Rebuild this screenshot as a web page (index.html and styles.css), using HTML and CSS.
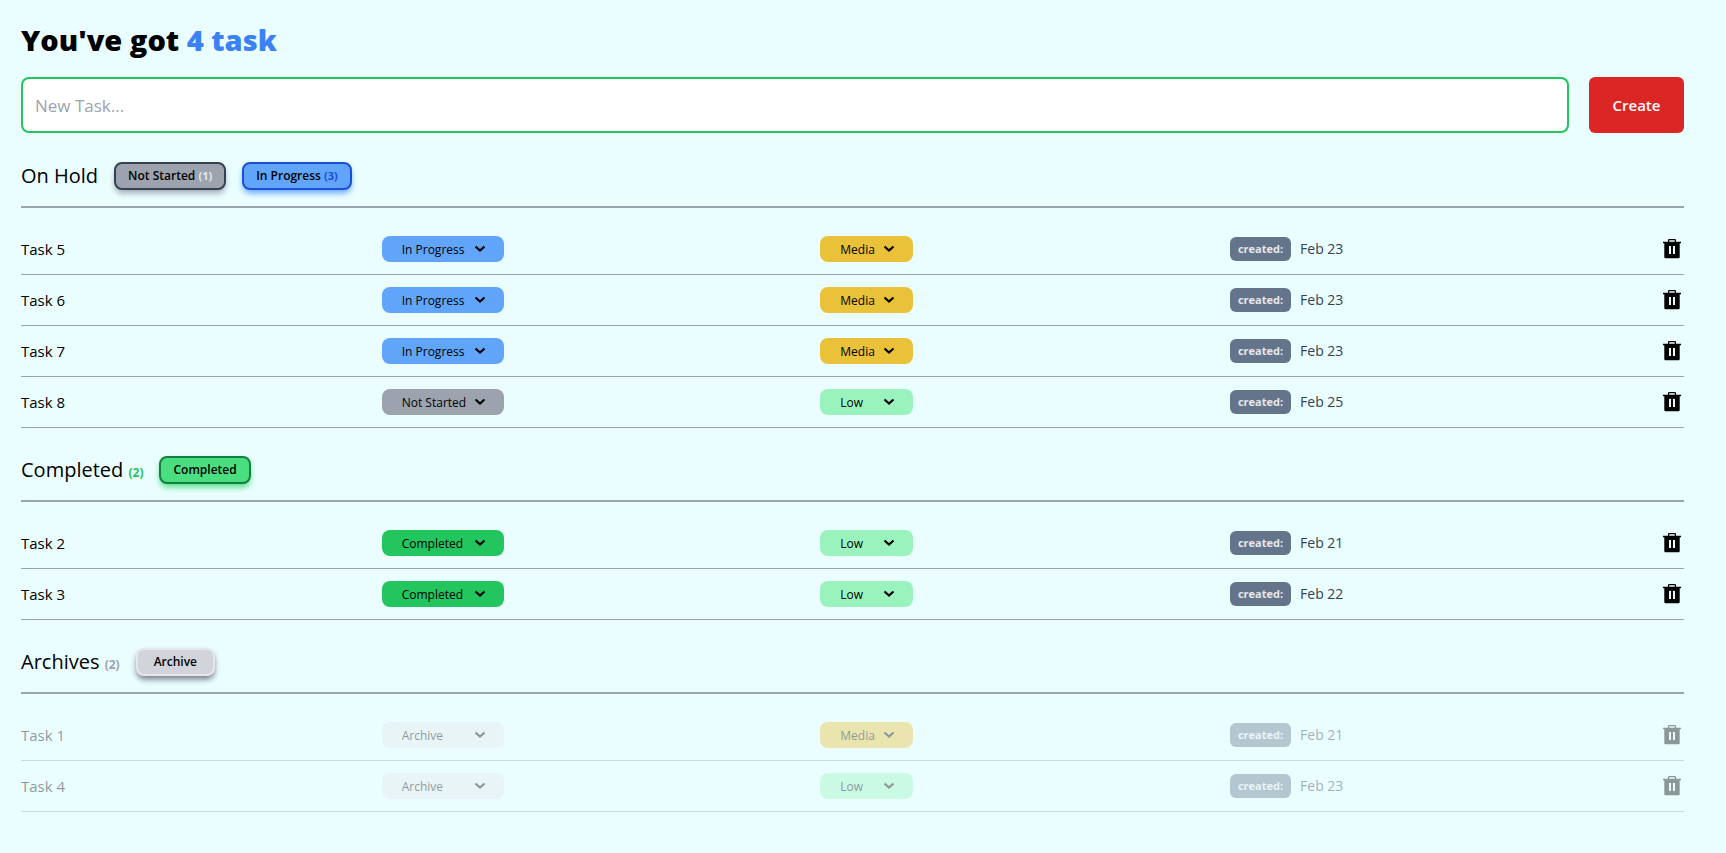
FILE: index.html
```html
<!DOCTYPE html>
<html lang="en">
<head>
<meta charset="utf-8">
<meta name="viewport" content="width=device-width, initial-scale=1">
<title>Tasks</title>
<link rel="stylesheet" href="styles.css">
</head>
<body>
<svg class="sprite" aria-hidden="true">
  <symbol id="trash" viewBox="0 0 20 22">
    <path d="M6.600 4V2.300Q6.600 1.700 7.200 1.700H12.800Q13.400 1.700 13.400 2.300V4" fill="none" stroke="currentColor" stroke-width="1.300"/>
    <path fill-rule="evenodd" d="M1 3.700H19V5.300H17.700V19Q17.700 20.300 16.400 20.300H3.600Q2.300 20.300 2.300 19V5.300H1ZM7 8V16H9V8ZM11 8V16H13V8Z" fill="currentColor"/>
  </symbol>
</svg>
<main class="page">
  <h1 class="title">You've got <span class="title-count">4 task</span></h1>
  <form class="new-task">
    <input class="new-task-input" type="text" placeholder="New Task..." aria-label="New task">
    <button class="new-task-submit" type="button">Create</button>
  </form>

  <section>
    <header class="section-head">
      <h2 class="section-title">On Hold</h2>
      <button class="badge badge-idle" type="button">Not Started <span class="count">(1)</span></button>
      <button class="badge badge-progress" type="button">In Progress <span class="count">(3)</span></button>
    </header>
    <ul class="tasks">
      <li class="task">
        <span class="task-name">Task 5</span>
        <select class="pick status progress" aria-label="Status of Task 5"><option>Not Started</option><option selected>In Progress</option><option>Completed</option><option>Archive</option></select>
        <select class="pick priority media" aria-label="Priority of Task 5"><option>Low</option><option selected>Media</option><option>High</option></select>
        <span class="created"><span class="created-label">created:</span><time>Feb 23</time></span>
        <button class="delete" type="button" aria-label="Delete Task 5"><svg class="icon"><use href="#trash"/></svg></button>
      </li>
      <li class="task">
        <span class="task-name">Task 6</span>
        <select class="pick status progress" aria-label="Status of Task 6"><option>Not Started</option><option selected>In Progress</option><option>Completed</option><option>Archive</option></select>
        <select class="pick priority media" aria-label="Priority of Task 6"><option>Low</option><option selected>Media</option><option>High</option></select>
        <span class="created"><span class="created-label">created:</span><time>Feb 23</time></span>
        <button class="delete" type="button" aria-label="Delete Task 6"><svg class="icon"><use href="#trash"/></svg></button>
      </li>
      <li class="task">
        <span class="task-name">Task 7</span>
        <select class="pick status progress" aria-label="Status of Task 7"><option>Not Started</option><option selected>In Progress</option><option>Completed</option><option>Archive</option></select>
        <select class="pick priority media" aria-label="Priority of Task 7"><option>Low</option><option selected>Media</option><option>High</option></select>
        <span class="created"><span class="created-label">created:</span><time>Feb 23</time></span>
        <button class="delete" type="button" aria-label="Delete Task 7"><svg class="icon"><use href="#trash"/></svg></button>
      </li>
      <li class="task">
        <span class="task-name">Task 8</span>
        <select class="pick status idle" aria-label="Status of Task 8"><option selected>Not Started</option><option>In Progress</option><option>Completed</option><option>Archive</option></select>
        <select class="pick priority low" aria-label="Priority of Task 8"><option selected>Low</option><option>Media</option><option>High</option></select>
        <span class="created"><span class="created-label">created:</span><time>Feb 25</time></span>
        <button class="delete" type="button" aria-label="Delete Task 8"><svg class="icon"><use href="#trash"/></svg></button>
      </li>
    </ul>
  </section>

  <section>
    <header class="section-head">
      <h2 class="section-title">Completed <span class="count count-done">(2)</span></h2>
      <button class="badge badge-done" type="button">Completed</button>
    </header>
    <ul class="tasks">
      <li class="task">
        <span class="task-name">Task 2</span>
        <select class="pick status done" aria-label="Status of Task 2"><option>Not Started</option><option>In Progress</option><option selected>Completed</option><option>Archive</option></select>
        <select class="pick priority low" aria-label="Priority of Task 2"><option selected>Low</option><option>Media</option><option>High</option></select>
        <span class="created"><span class="created-label">created:</span><time>Feb 21</time></span>
        <button class="delete" type="button" aria-label="Delete Task 2"><svg class="icon"><use href="#trash"/></svg></button>
      </li>
      <li class="task">
        <span class="task-name">Task 3</span>
        <select class="pick status done" aria-label="Status of Task 3"><option>Not Started</option><option>In Progress</option><option selected>Completed</option><option>Archive</option></select>
        <select class="pick priority low" aria-label="Priority of Task 3"><option selected>Low</option><option>Media</option><option>High</option></select>
        <span class="created"><span class="created-label">created:</span><time>Feb 22</time></span>
        <button class="delete" type="button" aria-label="Delete Task 3"><svg class="icon"><use href="#trash"/></svg></button>
      </li>
    </ul>
  </section>

  <section>
    <header class="section-head">
      <h2 class="section-title">Archives <span class="count count-archive">(2)</span></h2>
      <button class="badge badge-archive" type="button">Archive</button>
    </header>
    <ul class="tasks">
      <li class="task archived">
        <span class="task-name">Task 1</span>
        <select class="pick status archive" aria-label="Status of Task 1"><option>Not Started</option><option>In Progress</option><option>Completed</option><option selected>Archive</option></select>
        <select class="pick priority media" aria-label="Priority of Task 1"><option>Low</option><option selected>Media</option><option>High</option></select>
        <span class="created"><span class="created-label">created:</span><time>Feb 21</time></span>
        <button class="delete" type="button" aria-label="Delete Task 1"><svg class="icon"><use href="#trash"/></svg></button>
      </li>
      <li class="task archived">
        <span class="task-name">Task 4</span>
        <select class="pick status archive" aria-label="Status of Task 4"><option>Not Started</option><option>In Progress</option><option>Completed</option><option selected>Archive</option></select>
        <select class="pick priority low" aria-label="Priority of Task 4"><option selected>Low</option><option>Media</option><option>High</option></select>
        <span class="created"><span class="created-label">created:</span><time>Feb 23</time></span>
        <button class="delete" type="button" aria-label="Delete Task 4"><svg class="icon"><use href="#trash"/></svg></button>
      </li>
    </ul>
  </section>
</main>
</body>
</html>
```
FILE: styles.css
```css
* {
  box-sizing: border-box;
}

body {
  margin: 0;
  background: #ebfeff;
  color: #000;
  font-family: "Open Sans", "Noto Sans", sans-serif;
  font-size: 16px;
  line-height: 24px;
}

button,
input,
select {
  font-family: inherit;
  color: inherit;
  margin: 0;
}

.sprite {
  display: none;
}

.page {
  padding: 22px 42px 41px 21px;
}

.title {
  margin: 0 0 19px;
  font-size: 29px;
  line-height: 36px;
  font-weight: 800;
}

.title-count {
  color: #3b82f6;
}

.new-task {
  display: flex;
  gap: 20px;
  margin-bottom: 1px;
}

.new-task-input {
  flex: 1;
  min-width: 0;
  height: 56px;
  padding: 0 12px;
  border: 2px solid #22c55e;
  border-radius: 8px;
  background: #fff;
  font-size: 17px;
  font-weight: 500;
}

.new-task-input::placeholder {
  color: #9ca3af;
  opacity: 1;
}

.new-task-submit {
  width: 95px;
  border: 0;
  border-radius: 6px;
  background: #dc2626;
  color: #fff;
  font-size: 15px;
  font-weight: 600;
}

.section-head {
  display: flex;
  align-items: center;
  gap: 16px;
  padding: 28px 0 16px;
  border-bottom: 2px solid #9ca3af;
}

.section-title {
  margin: 0;
  font-size: 20px;
  line-height: 28px;
  font-weight: 500;
}

.count {
  font-size: 11px;
  line-height: 1;
  font-weight: 700;
}

.section-title .count {
  font-size: 12px;
}

.count-done {
  color: #22c55e;
}

.count-archive {
  color: #9ca3af;
}

.badge {
  padding: 4px 12px;
  border: 2px solid;
  border-radius: 8px;
  font-size: 12px;
  line-height: 16px;
  font-weight: 600;
  white-space: nowrap;
}

.badge-idle {
  background: #9ca3af;
  border-color: #374151;
  box-shadow: 0 4px 6px -1px #9ca3af;
}

.badge-idle .count {
  color: #e5e7eb;
}

.badge-progress {
  background: #60a5fa;
  border-color: #1d4ed8;
  box-shadow: 0 4px 6px -1px #60a5fa;
}

.badge-progress .count {
  color: #1d4ed8;
}

.badge-done {
  background: #4ade80;
  border-color: #15803d;
  box-shadow: 0 4px 6px -1px #4ade80;
}

.badge-archive {
  padding: 4px 16px;
  background: #d1d5db;
  border-color: #e5e7eb;
  box-shadow: 0 4px 6px -1px #6b7280;
}

.tasks {
  list-style: none;
  margin: 0;
  padding: 16px 0 0;
}

.task {
  display: flex;
  align-items: center;
  justify-content: space-between;
  height: 51px;
  border-bottom: 1px solid #9ca3af;
}

.archived {
  opacity: 0.4;
}

.task-name {
  font-size: 15px;
}

.pick {
  height: 26px;
  padding: 0 0 0 20px;
  border: 0;
  border-radius: 8px;
  appearance: none;
  background-image: url("data:image/svg+xml,%3Csvg xmlns='http://www.w3.org/2000/svg' viewBox='0 0 12 8'%3E%3Cpath d='M1.500 1.500L6 5.500L10.500 1.500' fill='none' stroke='black' stroke-width='2.200'/%3E%3C/svg%3E");
  background-repeat: no-repeat;
  background-position: right 18px center;
  background-size: 12px 8px;
  font-size: 12px;
}

.status {
  width: 122px;
}

.priority {
  width: 93px;
}

.progress {
  background-color: #60a5fa;
}

.idle {
  background-color: #9ca3af;
}

.done {
  background-color: #22c55e;
}

.archive {
  background-color: #e5e7eb;
}

.media {
  background-color: #e9c239;
}

.low {
  background-color: #9af3bd;
}

.created {
  display: flex;
  align-items: center;
  gap: 9px;
  color: #334155;
  font-size: 14px;
}

.created-label {
  padding: 0 8px;
  border-radius: 6px;
  background: #64748b;
  color: #e5e7eb;
  font-size: 11px;
  font-weight: 700;
}

.delete {
  display: flex;
  padding: 0 2px;
  border: 0;
  background: none;
}

.icon {
  width: 20px;
  height: 22px;
}
```
